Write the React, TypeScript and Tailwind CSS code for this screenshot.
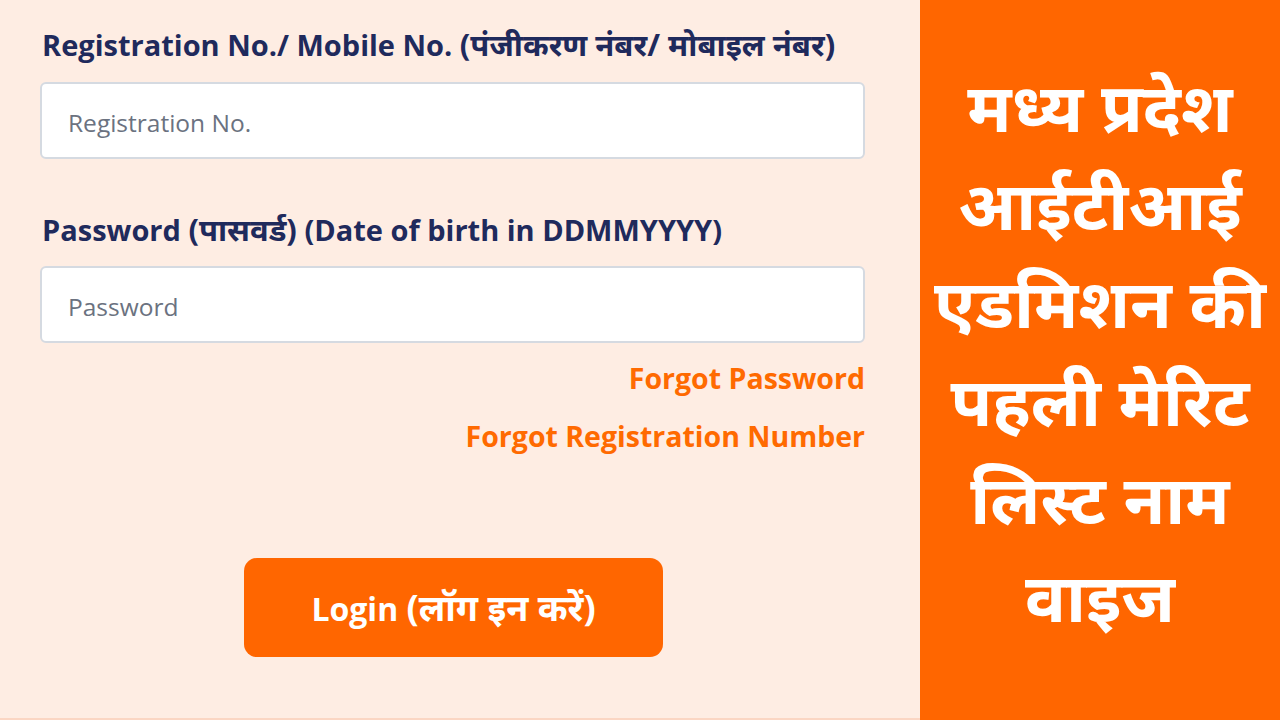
export default function App() {
  const font = { fontFamily: '"Open Sans", "Noto Sans", "Noto Sans Devanagari", sans-serif' };

  return (
    <div className="flex w-[1280px] h-[720px] overflow-hidden" style={font}>
      <div className="w-[920px] h-full bg-[#feede3] border-b-2 border-[#fbd6c3] pl-[40px] pr-[55px] pt-[26px]">
        <label className="block h-[38px] pl-[2px] text-[29px] leading-[38px] font-bold text-[#1f2a5c] whitespace-nowrap">
          Registration No./ Mobile No. <span className="text-[31px] leading-[0]">(पंजीकरण नंबर/ मोबाइल नंबर)</span>
        </label>
        <div className="mt-[18px] h-[77px] bg-white border-2 border-[#d5dae1] rounded-[6px] flex items-center px-[26px] pt-[6px]">
          <span className="text-[24.5px] text-[#6b7280]">Registration No.</span>
        </div>

        <label className="block h-[38px] mt-[52px] pl-[2px] text-[29px] leading-[38px] font-bold text-[#1f2a5c] whitespace-nowrap">
          Password <span className="text-[31px] leading-[0]">(पासवर्ड)</span> (Date of birth in DDMMYYYY)
        </label>
        <div className="mt-[17px] h-[77px] bg-white border-2 border-[#d5dae1] rounded-[6px] flex items-center px-[26px] pt-[5px]">
          <span className="text-[24.5px] text-[#6b7280]">Password</span>
        </div>

        <div className="flex flex-col items-end mt-[16px] gap-[20px]">
          <a className="text-[28.5px] leading-[38px] font-bold text-[#ff6a00]">Forgot Password</a>
          <a className="text-[28.5px] leading-[38px] font-bold text-[#ff6a00]">Forgot Registration Number</a>
        </div>

        <div className="flex pl-[204px] mt-[103px]">
          <button className="w-[419px] h-[99px] bg-[#ff6600] rounded-[13px] text-white text-[32px] font-bold whitespace-nowrap">
            Login <span className="text-[36px]">(लॉग इन करें)</span>
          </button>
        </div>
      </div>

      <div className="flex-1 h-full bg-[#ff6600] flex flex-col items-center justify-center pb-[18px]">
        <div className="text-white font-bold text-[68px] leading-[98px] text-center whitespace-nowrap">
          <div>मध्य प्रदेश</div>
          <div>आईटीआई</div>
          <div>एडमिशन की</div>
          <div>पहली मेरिट</div>
          <div>लिस्ट नाम</div>
          <div>वाइज</div>
        </div>
      </div>
    </div>
  );
}
